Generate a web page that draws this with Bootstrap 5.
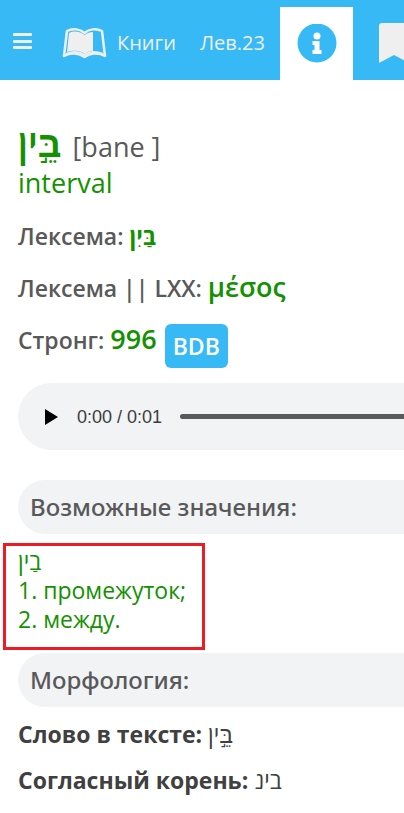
<!DOCTYPE html>
<html lang="ru">
<head>
<meta charset="utf-8">
<meta name="viewport" content="width=device-width, initial-scale=1">
<title>Лев.23</title>
<link href="https://cdn.jsdelivr.net/npm/bootstrap@5.3.0/dist/css/bootstrap.min.css" rel="stylesheet">
<style>
body{font-family:"Open Sans","Noto Sans",sans-serif;color:#595959;font-size:23px;line-height:32px;overflow-x:hidden}
.topbar{background:#37b9f6;height:80px;font-size:20px;line-height:28px;overflow:hidden}
.topbar a,.topbar .menu-btn{color:#efefef}
.topbar svg,.player svg{display:block}
.menu-btn{padding:3px 13px 0;width:62px}
.books{gap:10px;padding-top:6px;width:138px}
.chapter{padding-top:6px;width:80px}
.topbar .tab-info{background:#fff;width:73px;height:73px;color:#37b9f6}
.mark-link{padding:6px 0 0 26px}
.entry{padding:45px 0 0 18px}
.green{color:#149100}
.word{font-size:27px;line-height:36px;gap:11px}
.heb-big{font-size:37px;font-weight:600;line-height:36px}
.fields{padding-top:19px}
.field-row{height:52px;font-weight:600}
.strong-val{font-size:27px;line-height:28px}
.bdb{background:#37b9f6;color:#fff;font-size:23px;line-height:32px;font-weight:600;padding:6px 8px;border:0;border-radius:6px}
.player{background:#f1f3f5;height:67px;margin-top:7px;padding-left:27px}
.time{font:18px/24px "Liberation Sans",Arial,sans-serif;color:#3c3c3c;width:103px;margin-left:19px}
.seek{appearance:none;height:5px;background:#595959;border-radius:3px 0 0 3px;margin:0}
.seek::-webkit-slider-thumb{appearance:none;width:0;height:0}
.section-head{background:#f1f3f5;height:54px;padding-left:12px;font-family:"Noto Sans","Open Sans",sans-serif;font-size:24px;line-height:32px;font-weight:500;margin:0}
.first-head{margin-top:30px}
.meaning{border:3px solid #ed1c24;width:202px;height:107px;margin:9px 0 3px -15px;padding:1px 0 0 12px;line-height:29px}
.morph-list{padding-top:11px}
.morph{color:#404040;height:46px}
</style>
</head>
<body>
<nav class="topbar d-flex align-items-end" aria-label="Навигация">
  <button class="menu-btn btn rounded-0 border-0 h-100 d-flex flex-shrink-0 align-items-center" aria-label="Меню">
    <svg width="19" height="17" viewBox="0 0 19 17" fill="currentColor"><rect y="0" width="19" height="3" rx="1"/><rect y="7" width="19" height="3" rx="1"/><rect y="13" width="19" height="3" rx="1"/></svg>
  </button>
  <a href="#books" class="books text-decoration-none h-100 d-flex flex-shrink-0 align-items-center">
    <svg width="45" height="31" viewBox="0 0 45 31" fill="none" stroke="currentColor"><path d="M5 3C11 0 18 1 22.500 5C27 1 34 0 40 3L43 28C36 24 28 25 22.500 29C17 25 9 24 2 28Z" stroke-width="2.500" stroke-linejoin="round"/><path d="M7 5C13 2 19 4 22.500 7C25 5 28 4 31 4V23C28 23 25 24 22.500 26C18 22 11 22 5 24Z" fill="currentColor" stroke="none"/><path d="M4 26C11 23 18 24 22.500 27C28 23 34 23 41 26" stroke-width="2"/></svg>
    <span>Книги</span>
  </a>
  <a href="#chapter" class="chapter text-decoration-none h-100 d-flex flex-shrink-0 align-items-center">Лев.23</a>
  <a href="#info" class="tab-info d-flex flex-shrink-0 align-items-center justify-content-center" aria-label="Сведения">
    <svg width="40" height="40" viewBox="0 0 40 40"><circle cx="20" cy="19" r="19.500" fill="currentColor"/><g fill="#fff"><circle cx="20" cy="12" r="3.500"/><path d="M15.500 17H22.500V26H24.500V30H15.500V26H17.500V21H15.500Z"/></g></svg>
  </a>
  <a href="#bookmark" class="mark-link flex-shrink-0 h-100 d-flex align-items-center" aria-label="Закладка">
    <svg width="30" height="40" viewBox="0 0 30 40" fill="currentColor"><path d="M0 3Q0 0 3 0H27Q30 0 30 3V40L15 32L0 40Z"/></svg>
  </a>
</nav>
<main class="entry">
  <div class="word d-flex align-items-baseline"><bdi class="heb-big green" lang="he">בֵּ֣ין</bdi><span>[bane ]</span></div>
  <div class="word green">interval</div>
  <div class="fields">
    <div class="field-row">Лексема: <bdi class="green fw-bold" lang="he">בַּיִן</bdi></div>
    <div class="field-row">Лексема || LXX: <span class="strong-val green" lang="el">μέσος</span></div>
    <div class="field-row d-flex align-items-start gap-2"><span>Стронг: <span class="strong-val green">996</span></span><button class="bdb">BDB</button></div>
  </div>
  <div class="player rounded-start-pill d-flex align-items-center">
    <button class="btn p-0 border-0" aria-label="Воспроизвести"><svg width="13" height="16" viewBox="0 0 13 16"><path d="M0 0L13 8L0 16Z"/></svg></button>
    <span class="time">0:00 / 0:01</span>
    <input class="seek flex-grow-1" type="range" min="0" max="1" value="0" aria-label="Позиция">
  </div>
  <h2 class="section-head first-head rounded-start-pill d-flex align-items-center">Возможные значения:</h2>
  <div class="meaning green"><bdi lang="he">בַין</bdi><br>1. промежуток;<br>2. между.</div>
  <h2 class="section-head rounded-start-pill d-flex align-items-center">Морфология:</h2>
  <div class="morph-list">
    <div class="morph"><b>Слово в тексте:</b> <bdi lang="he">בֵּ֣ין</bdi></div>
    <div class="morph"><b>Согласный корень:</b> <bdi lang="he">בינ</bdi></div>
  </div>
</main>
<script src="https://cdn.jsdelivr.net/npm/bootstrap@5.3.0/dist/js/bootstrap.bundle.min.js"></script>
</body>
</html>
